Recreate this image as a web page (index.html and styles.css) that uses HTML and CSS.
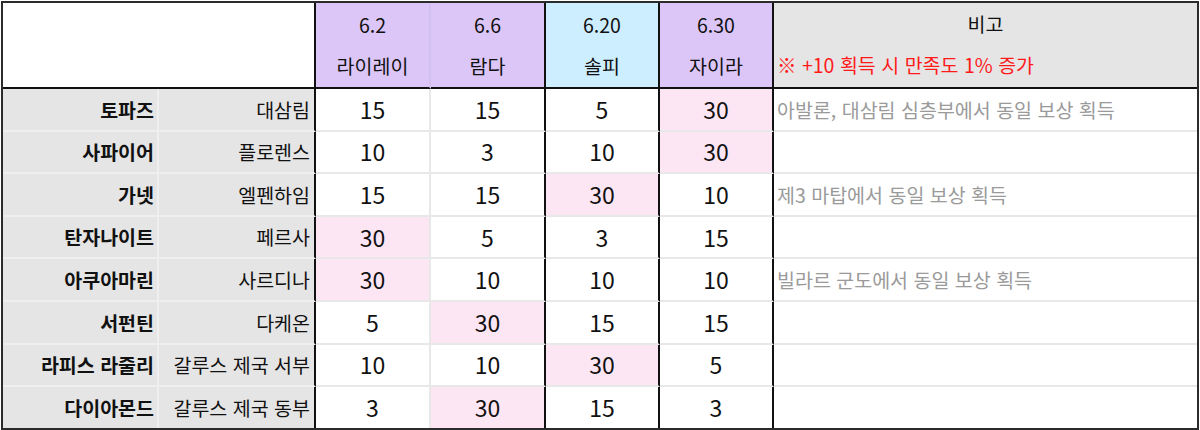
FILE: index.html
```html
<!DOCTYPE html>
<html lang="ko">
<head>
<meta charset="utf-8">
<title>보상 표</title>
<link rel="stylesheet" href="styles.css">
</head>
<body>
<div class="sheet">
  <div class="cell corner"></div>
  <div class="cell hd purple soft-r">6.2</div>
  <div class="cell hd purple hard-r">6.6</div>
  <div class="cell hd blue hard-r">6.20</div>
  <div class="cell hd purple hard-r">6.30</div>
  <div class="cell note-head">
    <div class="note-title">비고</div>
    <div class="note-sub">※ +10 획득 시 만족도 1% 증가</div>
  </div>
  <div class="cell hd hd2 purple soft-r">라이레이</div>
  <div class="cell hd hd2 purple hard-r">람다</div>
  <div class="cell hd hd2 blue hard-r">솔피</div>
  <div class="cell hd hd2 purple hard-r">자이라</div>

  <div class="cell gem">토파즈</div><div class="cell area">대삼림</div><div class="cell n soft">15</div><div class="cell n">15</div><div class="cell n">5</div><div class="cell n pink">30</div><div class="cell note">아발론, 대삼림 심층부에서 동일 보상 획득</div>
  <div class="cell gem">사파이어</div><div class="cell area">플로렌스</div><div class="cell n soft">10</div><div class="cell n">3</div><div class="cell n">10</div><div class="cell n pink">30</div><div class="cell note"></div>
  <div class="cell gem">가넷</div><div class="cell area">엘펜하임</div><div class="cell n soft">15</div><div class="cell n">15</div><div class="cell n pink">30</div><div class="cell n">10</div><div class="cell note">제3 마탑에서 동일 보상 획득</div>
  <div class="cell gem">탄자나이트</div><div class="cell area">페르사</div><div class="cell n soft pink">30</div><div class="cell n">5</div><div class="cell n">3</div><div class="cell n">15</div><div class="cell note"></div>
  <div class="cell gem">아쿠아마린</div><div class="cell area">사르디나</div><div class="cell n soft pink">30</div><div class="cell n">10</div><div class="cell n">10</div><div class="cell n">10</div><div class="cell note">빌라르 군도에서 동일 보상 획득</div>
  <div class="cell gem">서펀틴</div><div class="cell area">다케온</div><div class="cell n soft">5</div><div class="cell n pink">30</div><div class="cell n">15</div><div class="cell n">15</div><div class="cell note"></div>
  <div class="cell gem">라피스 라줄리</div><div class="cell area">갈루스 제국 서부</div><div class="cell n soft">10</div><div class="cell n">10</div><div class="cell n pink">30</div><div class="cell n">5</div><div class="cell note"></div>
  <div class="cell gem last">다이아몬드</div><div class="cell area last">갈루스 제국 동부</div><div class="cell n soft last">3</div><div class="cell n pink last">30</div><div class="cell n last">15</div><div class="cell n last">3</div><div class="cell note last"></div>
</div>
</body>
</html>
```

FILE: styles.css
```css
html, body {
  margin: 0;
  padding: 0;
  background: #ffffff;
}

body {
  padding: 1px 0 0 1px;
  font-family: "Noto Sans CJK KR", "Noto Sans", sans-serif;
  color: #111111;
}

.sheet {
  box-sizing: border-box;
  width: 1198px;
  height: 429px;
  border: 2px solid #2b2b2b;
  display: grid;
  grid-template-columns: 156px 157px 115px 115px 114px 114px 1fr;
  grid-template-rows: 42px 44px repeat(7, 42.6px) 1fr;
  font-size: 19.5px;
  line-height: 1;
}

.cell {
  box-sizing: border-box;
  display: flex;
  align-items: center;
  white-space: nowrap;
  overflow: hidden;
  min-width: 0;
}

.corner {
  grid-column: span 2;
  grid-row: span 2;
  background: #ffffff;
  border-right: 2px solid #111111;
  border-bottom: 2px solid #111111;
}

.hd {
  justify-content: center;
  padding-top: 1px;
}

.hd2 {
  border-bottom: 2px solid #111111;
  padding-top: 0;
}

.purple { background: #dcc6f8; }
.blue { background: #cdeeff; }

.soft-r { border-right: 2px solid #d2c0ee; }
.hard-r { border-right: 2px solid #111111; }

.note-head {
  grid-row: span 2;
  background: #e5e5e5;
  border-bottom: 2px solid #111111;
  flex-direction: column;
  align-items: stretch;
}

.note-title {
  height: 42px;
  display: flex;
  align-items: center;
  justify-content: center;
  padding-bottom: 1px;
  box-sizing: border-box;
}

.note-sub {
  flex: 1;
  display: flex;
  align-items: center;
  padding-left: 3px;
  padding-bottom: 2px;
  color: #ff1a1a;
}

.gem,
.area,
.n,
.note {
  border-bottom: 2px solid #e8e8e8;
}

.gem {
  background: #e5e5e5;
  justify-content: flex-end;
  font-weight: 700;
  padding-right: 3px;
  border-right: 2px solid #efefef;
  border-bottom-color: #efefef;
}

.area {
  background: #e5e5e5;
  justify-content: flex-end;
  padding-right: 4px;
  border-right: 2px solid #111111;
  border-bottom-color: #efefef;
}

.n {
  justify-content: center;
  font-size: 23px;
  border-right: 2px solid #111111;
}

.n.soft { border-right-color: #e8e8e8; }

.pink { background: #fde6f4; }

.note {
  padding-left: 3px;
  color: #9a9a9a;
}

.cell.last { border-bottom: 0; }
```
